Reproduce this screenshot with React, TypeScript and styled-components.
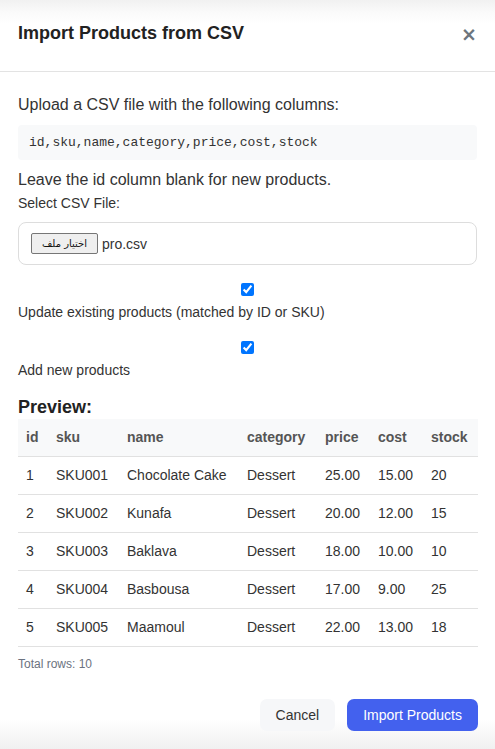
import React from "react";
import styled, { createGlobalStyle } from "styled-components";

const Global = createGlobalStyle`
  html, body { margin: 0; padding: 0; background: #fff; }
  body { font-family: "Liberation Sans", Arial, sans-serif; color: #333; }
  * { box-sizing: border-box; }
`;

const Modal = styled.div`
  width: 495px;
  min-height: 749px;
  background: #fff;
  display: flex;
  flex-direction: column;
`;

const Header = styled.div`
  display: flex;
  align-items: center;
  justify-content: space-between;
  padding: 20px 18px 24px 18px;
  border-bottom: 1px solid #e3e3e3;
  background: linear-gradient(to bottom, #f1f1f1 0px, #fafafa 12px, #ffffff 24px);
`;

const Title = styled.h2`
  margin: 0;
  font-size: 18px;
  line-height: 27px;
  font-weight: 700;
  color: #222;
`;

const Close = styled.button`
  border: none;
  background: none;
  padding: 0;
  margin-right: 0;
  font-family: "DejaVu Sans", sans-serif;
  font-size: 19px;
  line-height: 20px;
  font-weight: 700;
  color: #6c757d;
  cursor: pointer;
`;

const Body = styled.div`
  padding: 24px 18px 0 18px;
  display: flex;
  flex-direction: column;
`;

const Lead = styled.p`
  margin: 0;
  font-size: 16px;
  line-height: 18px;
  color: #333;
`;

const Code = styled.pre`
  margin: 11px 0 11px 0;
  padding: 10px 11px;
  background: #f8f9fa;
  border-radius: 4px;
  font-family: "Liberation Mono", "Courier New", monospace;
  font-size: 13px;
  line-height: 15px;
  color: #333;
`;

const Label = styled.label`
  display: block;
  font-size: 14px;
  line-height: 16px;
  color: #333;
`;

const FieldLabel = styled(Label)`
  margin-top: 6px;
`;

const FileBox = styled.div`
  margin-top: 11px;
  border: 1px solid #dddddd;
  border-radius: 8px;
  padding: 10px 12px;
  display: flex;
  align-items: center;
  gap: 4px;
  font-size: 14px;
`;

const FileButton = styled.span`
  display: inline-flex;
  align-items: center;
  justify-content: center;
  width: 67px;
  height: 21px;
  padding: 0 6px;
  border: 1px solid #767676;
  border-radius: 2px;
  background: #efefef;
  font-family: "DejaVu Sans", "Noto Sans", sans-serif;
  font-size: 10px;
  color: #111;
  direction: rtl;
`;

const FileName = styled.span`
  font-size: 14px;
  color: #333;
`;

const Option = styled.div<{ $first?: boolean }>`
  margin-top: ${(p) => (p.$first ? "18px" : "21px")};
  display: flex;
  flex-direction: column;
`;

const Check = styled.input`
  display: block;
  width: 13px;
  height: 13px;
  margin: 0 auto 8px auto;
`;

const PreviewTitle = styled.h3`
  margin: 19px 0 1px 0;
  font-size: 18px;
  line-height: 21px;
  font-weight: 700;
  color: #222;
`;

const Table = styled.table`
  width: 460px;
  border-collapse: collapse;
  table-layout: fixed;
  font-size: 14px;
`;

const Th = styled.th`
  text-align: left;
  font-weight: 700;
  color: #555;
  background: #f8f9fa;
  padding: 10px 0 10px 8px;
  line-height: 17px;
  border-bottom: 1px solid #e1e1e1;
  white-space: nowrap;
`;

const Td = styled.td`
  text-align: left;
  color: #333;
  padding: 10px 0 10px 8px;
  line-height: 17px;
  border-bottom: 1px solid #e1e1e1;
  white-space: nowrap;
`;

const Total = styled.div`
  margin-top: 10px;
  font-size: 12px;
  line-height: 14px;
  color: #6b7280;
`;

const Footer = styled.div`
  margin-top: 28px;
  flex: 1;
  display: flex;
  justify-content: flex-end;
  align-items: flex-start;
  gap: 12px;
  padding: 0 17px 0 18px;
  background: linear-gradient(to bottom, #ffffff 0px, #ffffff 20px, #f0f0f0 100%);
`;

const Button = styled.button<{ $primary?: boolean }>`
  border: none;
  border-radius: 7px;
  padding: 0 16px;
  height: 32px;
  font-family: "Liberation Sans", Arial, sans-serif;
  font-size: 14px;
  cursor: pointer;
  background: ${(p) => (p.$primary ? "#4361ee" : "#f6f7f9")};
  color: ${(p) => (p.$primary ? "#ffffff" : "#333333")};
`;

const rows = [
  ["1", "SKU001", "Chocolate Cake", "Dessert", "25.00", "15.00", "20"],
  ["2", "SKU002", "Kunafa", "Dessert", "20.00", "12.00", "15"],
  ["3", "SKU003", "Baklava", "Dessert", "18.00", "10.00", "10"],
  ["4", "SKU004", "Basbousa", "Dessert", "17.00", "9.00", "25"],
  ["5", "SKU005", "Maamoul", "Dessert", "22.00", "13.00", "18"],
];

const cols = ["id", "sku", "name", "category", "price", "cost", "stock"];
const widths = [30, 71, 120, 78, 53, 53, 55];

export default function App() {
  return (
    <>
      <Global />
      <Modal>
        <Header>
          <Title>Import Products from CSV</Title>
          <Close aria-label="close">×</Close>
        </Header>
        <Body>
          <Lead>Upload a CSV file with the following columns:</Lead>
          <Code>id,sku,name,category,price,cost,stock</Code>
          <Lead>Leave the id column blank for new products.</Lead>
          <FieldLabel>Select CSV File:</FieldLabel>
          <FileBox>
            <FileButton>اختيار ملف</FileButton>
            <FileName>pro.csv</FileName>
          </FileBox>
          <Option $first>
            <Check type="checkbox" defaultChecked />
            <Label>Update existing products (matched by ID or SKU)</Label>
          </Option>
          <Option>
            <Check type="checkbox" defaultChecked />
            <Label>Add new products</Label>
          </Option>
          <PreviewTitle>Preview:</PreviewTitle>
          <Table>
            <colgroup>
              {widths.map((w, i) => (
                <col key={i} style={{ width: w }} />
              ))}
            </colgroup>
            <thead>
              <tr>
                {cols.map((c) => (
                  <Th key={c}>{c}</Th>
                ))}
              </tr>
            </thead>
            <tbody>
              {rows.map((r) => (
                <tr key={r[0]}>
                  {r.map((v, i) => (
                    <Td key={i}>{v}</Td>
                  ))}
                </tr>
              ))}
            </tbody>
          </Table>
          <Total>Total rows: 10</Total>
        </Body>
        <Footer>
          <Button>Cancel</Button>
          <Button $primary>Import Products</Button>
        </Footer>
      </Modal>
    </>
  );
}
